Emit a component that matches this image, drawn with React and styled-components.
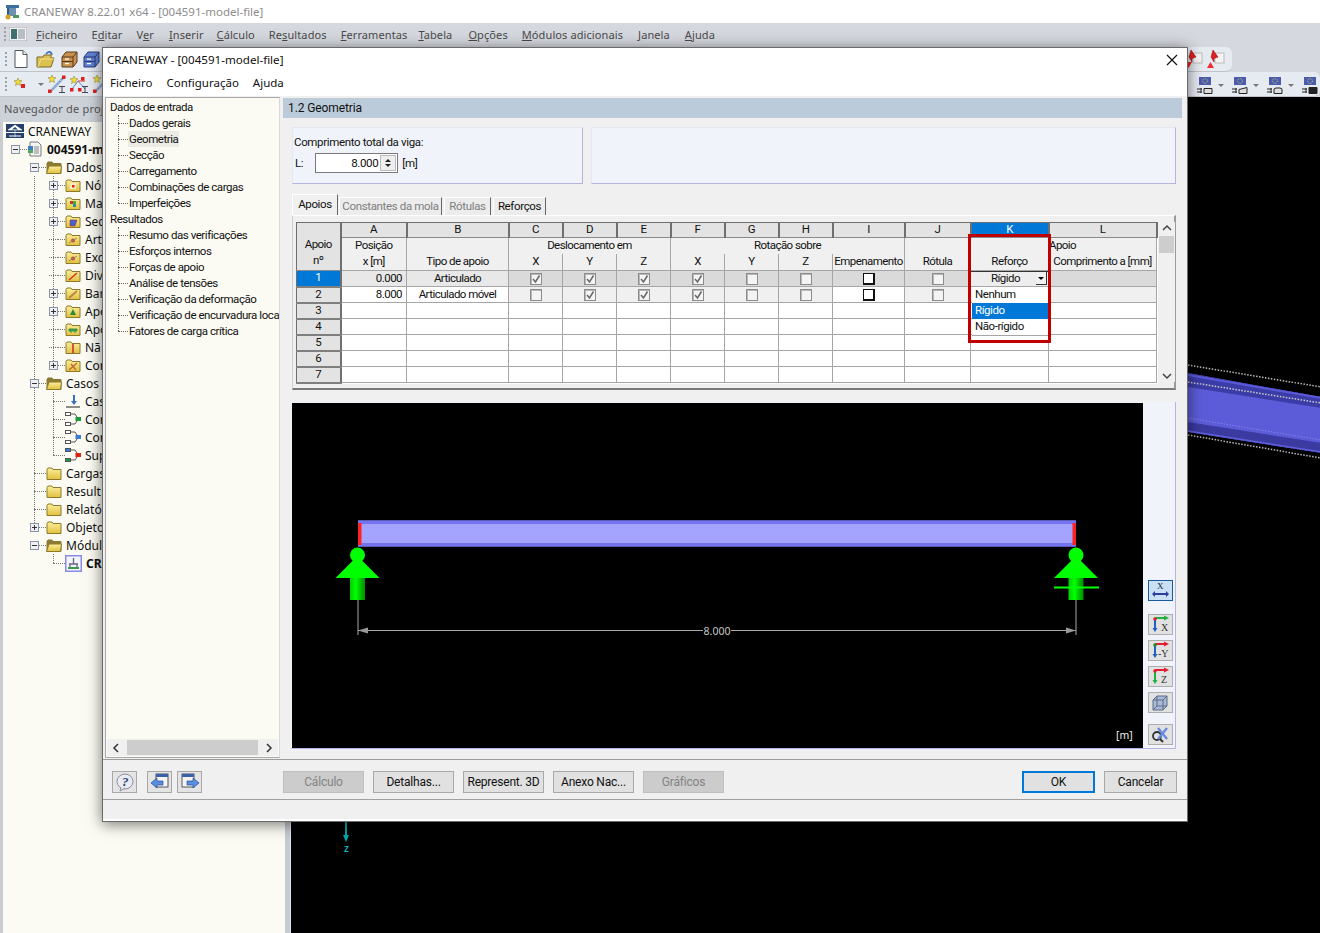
import React from "react";
import styled, { createGlobalStyle } from "styled-components";

const Global = createGlobalStyle`
  html, body { margin: 0; padding: 0; background: #fff; }
  * { box-sizing: border-box; }
  #root { font-family: "Noto Sans", "Liberation Sans", sans-serif; font-size: 12px; color: #111; }
`;

/* ---------- icons ---------- */
const Svg = ({ w = 16, h = 16, vb, children }) => (
  <svg width={w} height={h} viewBox={vb || `0 0 ${w} ${h}`} style={{ display: "block", flex: "none" }}>{children}</svg>
);
const FolderBase = ({ children, open }) => (
  <Svg>
    <defs>
      <linearGradient id="fold" x1="0" x2="0" y1="0" y2="1"><stop offset="0" stopColor="#fbee9c" /><stop offset="1" stopColor="#e2c140" /></linearGradient>
    </defs>
    <path d="M1 4.500 2 3h4l1 1.500h8v10H1z" fill={open ? "#8a7a34" : "url(#fold)"} stroke="#8c7a2a" />
    {open ? <path d="M.5 14.500 3 7h12.500l-1 7.500z" fill="url(#fold)" stroke="#8c7a2a" /> : null}
    {children}
  </Svg>
);
const mark = {
  node: <g><rect x="5" y="6" width="6" height="6" fill="#f6ecc0" /><rect x="7" y="8" width="2.500" height="2.500" fill="#d22" /></g>,
  mat: <g><rect x="5" y="6" width="3" height="3" fill="#c33" /><rect x="8" y="9" width="3" height="3" fill="#38a" /><rect x="8" y="6" width="3" height="3" fill="#4a4" /><rect x="5" y="9" width="3" height="3" fill="#dd4" /></g>,
  sec: <path d="M5 7h7l-2 6H5z" fill="#4466cc" stroke="#a33" strokeWidth=".6" />,
  hinge: <g><circle cx="8" cy="9.500" r="2" fill="#c44" /><path d="M4 12 12 7" stroke="#886" /></g>,
  line: <path d="M4 13 12 6" stroke="#c33" strokeWidth="1.400" />,
  bar: <path d="M4 13 12 6" stroke="#b84" strokeWidth="2" />,
  sup: <path d="M8 6 11 12H5z" fill="#2a8a3a" />,
  rail: <path d="M4 8h8v2H4zM6 10v2M10 10v2" fill="#3a9a4a" stroke="#3a9a4a" />,
  nl: <path d="M8 5v9" stroke="#c33" strokeWidth="1.600" />,
  con: <path d="M4 13 12 6M6 7l5 6" stroke="#b63" strokeWidth="1.200" />,
};
const Load = () => (
  <Svg><path d="M8 2h2v6h2l-3 4-3-4h2z" fill="#3b6fc0" /><path d="M1 14h14" stroke="#444" strokeWidth="1.200" /></Svg>
);
const Combo = ({ a = "#fff", b = "#fff", c }) => (
  <Svg>
    <rect x=".5" y="1.500" width="5" height="3" fill={a} stroke="#555" />
    <rect x=".5" y="11.500" width="5" height="3" fill={b} stroke="#555" />
    <path d="M6 3h4l2 3M6 13h4l2-3" stroke="#555" fill="none" />
    <rect x="11" y="6.500" width="5" height="3" fill={c} stroke={c} />
  </Svg>
);
const Logo = () => (
  <Svg w={18} h={14}>
    <rect width="18" height="14" fill="#27406e" />
    <path d="M9 1 2 6h14zM9 1v12" fill="#fff" stroke="#fff" strokeWidth=".6" />
    <path d="M9 3 6 5.500h6z" fill="#27406e" />
    <path d="M0 8.500h18M3 12h12" stroke="#fff" />
  </Svg>
);
const DocModel = () => (
  <Svg>
    <path d="M3 1h8l3 3v11H3z" fill="#f4f4f4" stroke="#7a7a7a" />
    <rect x="1" y="5" width="5" height="4" fill="#3f7fc0" />
    <rect x="1" y="9" width="5" height="3" fill="#52a860" />
    <path d="M7 6h5M7 8h5M7 10h5M7 12h5" stroke="#888" />
  </Svg>
);
const CraneMod = () => (
  <Svg w={17} h={17}>
    <rect x=".75" y=".75" width="15.500" height="15.500" fill="#f4f4ff" stroke="#8a8ae8" strokeWidth="1.500" />
    <path d="M8.500 3v6M4 9h9M5 9v4M12 9v4" stroke="#667" strokeWidth="1.300" fill="none" />
    <path d="M3 13h11" stroke="#3a9a4a" strokeWidth="2" />
  </Svg>
);
const Doc = () => <Svg w={14} h={18}><path d="M1 .5h8l4 4v13H1z" fill="#fff" stroke="#555" /><path d="M9 .5v4h4" fill="#eee" stroke="#555" /></Svg>;
const OpenFolder = () => <Svg w={19} h={18}><path d="M1 7h6l1-2h7v3h3l-3 9H1z" fill="#dcc050" stroke="#7d6a24" /><path d="M2 17 5 9h13" fill="none" stroke="#f2e08a" /><path d="M10 4c2-3 5-3 6 1" stroke="#3b6fc0" strokeWidth="1.600" fill="none" /></Svg>;
const Drawer = ({ c, d }) => <Svg w={17} h={18}><path d="M1 7 5 2h11v10l-4 5H1z" fill={c} stroke={d} /><path d="M1 7h11v10M12 7l4-5M1 11.500h11" stroke={d} fill="none" /><rect x="4" y="8.500" width="4" height="1.200" fill="#fff" /><rect x="4" y="13" width="4" height="1.200" fill="#fff" /></Svg>;
const StarShape = ({ x = 0, y = 0 }) => <path transform={`translate(${x} ${y})`} d="M4 0 5 2.600l3 .2L5.700 4.600l.8 3L4 6 1.500 7.600l.8-3L0 2.800l3-.2z" fill="#efe13a" stroke="#8a7a20" strokeWidth=".5" />;
const Star = () => <Svg w={14} h={14}><StarShape x={1} y={1} /><rect x="8" y="7" width="4" height="4" fill="#d22" /></Svg>;
const WandI = ({ tail = true }) => <Svg w={19} h={20}><path d="M3 18 17 3" stroke="#7a9ac8" strokeWidth="2.400" /><path d="M3 18 17 3" stroke="#fff" strokeWidth=".7" strokeDasharray="1.500 1.500" /><rect x="1" y="15.500" width="3.500" height="3.500" fill="#d22" /><rect x="15" y="1.500" width="3.500" height="3.500" fill="#d22" /><StarShape x={1} y={1} />{tail ? <path d="M12 12.500h6M15 12.500v5.500M12 18.500h6" stroke="#445" /> : null}</Svg>;
const Nodes = () => <Svg w={20} h={20}><path d="M3 15 9 7l7 8" stroke="#5a8ad8" fill="none" /><path d="M9 7l7 0" stroke="#d33" /><rect x="12" y="3" width="3.500" height="3.500" fill="#d22" /><rect x="1" y="14" width="3.500" height="3.500" fill="#d22" /><rect x="9" y="14" width="3.500" height="3.500" fill="#d22" /><StarShape x={1} y={2} /><path d="M13 12.500h6M16 12.500v5.500M13 18.500h6" stroke="#445" /></Svg>;
const RedPin = ({ up }) => <Svg w={18} h={20}><rect x="8" y="4" width="9" height="10" fill="#f4f4f4" stroke="#bbb" /><path d="M6 1 11 8 7 9.500 7 13 4 8z" fill="#d22" stroke="#900" strokeWidth=".5" />{up ? <path d="M0 19l3.500-6 3.500 6z" fill="#ef3030" /> : <path d="M0 13h7l-3.500 6z" fill="#e22" />}</Svg>;
const EuSup = ({ v }) => (
  <Svg w={16} h={17}>
    <rect x="2" y="0" width="12" height="8" fill="#4a5cb0" />
    <circle cx="8" cy="4" r="2.400" fill="none" stroke="#d8c840" strokeDasharray="1 1" />
    <path d="M0 12h5M0 15h5M4 11v5" stroke="#222" />
    <path d={v === 1 ? "M7 11.500h8v5H7z" : v === 2 ? "M7 12.500l8-2v6H7z" : v === 3 ? "M7 16.500V12l2-1h4l2 1v4.500z" : "M7 10.500h8v6H7zM9 13.500h4v3H9z"} fill={v === 4 ? "#222" : "#ddd"} stroke="#222" />
  </Svg>
);
const ColorAxes = ({ a, b, l }) => (
  <Svg w={19} h={19}>
    <path d="M4 4v11" stroke={b} strokeWidth="2" />
    <path d="M1.500 13h5L4 17z" fill={b} />
    <path d="M4 3h11" stroke={a} strokeWidth="2" />
    <path d="M13 .5v5L18 3z" fill={a} />
    <circle cx="4" cy="4" r="1.800" fill={l === "-Y" ? "#2a8a2a" : "#d23"} />
    <text x={l === "-Y" ? 7 : 10} y="16" fontSize="10" fontFamily="Liberation Serif, serif" fill="#333">{l}</text>
  </Svg>
);
const HelpIcon = () => <Svg w={20} h={20}><ellipse cx="10" cy="9.500" rx="8" ry="7.500" fill="#e8ecf2" stroke="#8a8fa0" /><path d="M6 15 5 19l5-3" fill="#e8ecf2" stroke="#8a8fa0" /><text x="7" y="14" fontSize="13" fontWeight="700" fontStyle="italic" fontFamily="Liberation Serif, serif" fill="#27406e">?</text></Svg>;
const PageArrow = ({ right }) => (
  <Svg w={20} h={18}>
    <rect x={right ? 2 : 6} y="1" width="12" height="13" fill="#f4f4f4" stroke="#556" />
    <rect x={right ? 2 : 6} y="1" width="12" height="3" fill="#3b5fa8" />
    <path d={right ? "M7 8h6V5l6 5-6 5v-3H7z" : "M13 8H7V5l-6 5 6 5v-3h6z"} fill="#5a8fe0" stroke="#274a90" strokeWidth=".7" />
  </Svg>
);

/* ---------- background application ---------- */
const Screen = styled.div`
  position: relative; width: 1320px; height: 933px; overflow: hidden; display: flex; flex-direction: column; background: #fff;
`;
const AppTitle = styled.div`
  height: 23px; flex: none; display: flex; align-items: center; gap: 4px; padding-left: 4px; background: #fff;
  color: #8d8d8d; font-size: 11.5px;
`;
const AppMenu = styled.div`
  height: 24px; flex: none; display: flex; align-items: center; background: #d5d8de; padding: 0 0 2px 4px;
`;
const Grip = styled.i`
  display: block; width: 2px; height: 14px; flex: none;
  background: repeating-linear-gradient(#9aa2ac 0 2px, transparent 2px 4px);
`;
const MenuItem = styled.span`
  color: #4a4a4a; font-size: 11px; letter-spacing: .1px; margin-left: ${p => p.$m}px; white-space: nowrap;
  u { text-decoration: underline; }
`;
const ToolRow = styled.div`
  height: ${p => p.$h}px; flex: none; background: #d5d8de;
`;
const Tool = styled.div`
  height: 100%; width: ${p => p.$w ? p.$w + "px" : "auto"}; display: flex; align-items: center; padding-left: 5px;
  background: #e6eaf1; border-radius: 0 6px 6px 0; border-bottom: 1px solid #c0c4ca;
`;
const ToolGap = styled.span`
  display: flex; align-items: center; margin-left: ${p => p.$m}px; margin-top: ${p => p.$t || 0}px; gap: ${p => p.$g || 0}px; flex: none;
`;
const Caret = styled.i`
  display: block; width: 0; height: 0; margin-left: ${p => p.$m || 0}px; border: 3px solid transparent; border-top: 3px solid #777; border-bottom: 0;
`;
const AppBody = styled.div`flex: 1; display: flex; min-height: 0;`;
const NavPanel = styled.div`
  width: 285px; flex: none; background: #fbfbf3; border-left: 3px solid #c9cdd2; display: flex; flex-direction: column;
`;
const NavTitle = styled.div`
  height: 25px; flex: none; margin-left: -3px; padding: 0 0 0 4px; background: #cdd1d8; color: #555; font-size: 11px; letter-spacing: .2px; line-height: 24px; white-space: nowrap;
`;
const Tree = styled.div`width: 99px; overflow: hidden;`;
const TreeRow = styled.div`
  height: 18px; display: flex; align-items: center; white-space: nowrap; padding-left: ${p => p.$x}px;
  font-size: 12px; font-weight: ${p => (p.$b ? 700 : 400)};
`;
const Branch = styled.div`
  position: relative;
  &::before { content: ""; position: absolute; left: ${p => p.$x}px; top: 0; bottom: ${p => p.$tail}px; border-left: 1px dotted #777; }
`;
const Exp = styled.span`
  width: 9px; height: 9px; flex: none; position: relative; z-index: 1; background: #eef0f4; border: 1px solid #8a94a4;
  &::before { content: ""; position: absolute; left: 1px; right: 1px; top: 3px; height: 1px; background: #333; }
  &::after { content: ${p => (p.$minus ? "none" : '""')}; position: absolute; top: 1px; bottom: 1px; left: 3px; width: 1px; background: #333; }
`;
const Stub = styled.span`
  display: block; width: ${p => p.$w}px; flex: none; border-top: 1px dotted #777;
`;
const NodeLabel = styled.span`margin-left: ${p => p.$m ?? 4}px;`;
const Splitter = styled.div`width: 6px; flex: none; background: #c6cbd1; border-right: 1px solid #e2e5e8;`;
const View3D = styled.div`flex: 1; background: #000; position: relative;`;
const SceneSvg = styled.svg`position: absolute; left: 0; top: 0; display: block;`;

/* ---------- dialog ---------- */
const Dialog = styled.div`
  position: absolute; left: 102px; top: 47px; width: 1086px; height: 775px; background: #f0f0f0;
  border: 1px solid #6a6a6a; box-shadow: 0 2px 14px rgba(0,0,0,.55); display: flex; flex-direction: column;
`;
const DlgTitle = styled.div`
  height: 23px; flex: none; background: #fff; display: flex; align-items: center; justify-content: space-between; padding: 0 9px 0 4px; font-size: 11.6px;
`;
const DlgMenu = styled.div`
  height: 25px; flex: none; background: #fff; display: flex; align-items: center; gap: 14px; padding: 0 0 2px 7px; font-size: 11.5px;
`;
const DlgBody = styled.div`flex: 1; min-height: 0; display: flex; padding: 1px 5px 0 2px; gap: 3px;`;
const DlgNav = styled.div`
  width: 175px; flex: none; background: #fbfbf3; border: 1px solid #a9a9a9; border-right-color: #d8d8d8; display: flex; flex-direction: column;
`;
const DlgTree = styled.div`flex: 1; min-height: 0; overflow: hidden; padding: 1px 0 0 4px; white-space: nowrap; font-family: Roboto, sans-serif; font-size: 11.5px; letter-spacing: -.44px;`;
const DlgHead = styled.div`height: 16px; line-height: 16px;`;
const DlgGroup = styled.div`
  position: relative;
  &::before { content: ""; position: absolute; left: 8px; top: 0; bottom: 8px; border-left: 1px dotted #666; }
`;
const DlgLeaf = styled.div`
  height: 16px; line-height: 16px; display: flex; align-items: center; padding-left: 8px;
  span { padding: 0 1px; ${p => p.$active ? "background: #ecece4;" : ""} }
  &::before { content: ""; width: 10px; flex: none; border-top: 1px dotted #666; }
`;
const HScroll = styled.div`
  height: 17px; flex: none; margin: 0 1px 1px; display: flex; align-items: center; justify-content: space-between; background: #f0f0f0; padding: 0 5px;
`;
const HThumb = styled.div`width: 131px; height: 15px; background: #cdcdcd;`;
const Main = styled.div`flex: 1; min-width: 0; padding-top: 1px; font-family: Roboto, sans-serif;`;
const SectionHead = styled.div`
  height: 20px; background: #bccbd9; padding-left: 5px; line-height: 20px; font-size: 12px; letter-spacing: -.1px;
`;
const PanelRow = styled.div`display: flex; gap: 8px; margin: 9px 6px 0 9px;`;
const InfoPanel = styled.div`
  width: ${p => p.$w ? p.$w + "px" : "auto"}; flex: ${p => p.$w ? "none" : 1}; height: 57px; background: #f0f4fa;
  border: 1px solid #e4e8f4; border-right-color: #b4b4e0; border-bottom-color: #b4b4e0; padding: 6px 0 0 1px; font-size: 11.5px; letter-spacing: -.35px; line-height: 16px;
`;
const FieldRow = styled.div`display: flex; align-items: center; margin-top: 3px; padding-left: 1px;`;
const NumBox = styled.div`
  width: 83px; height: 20px; margin: 0 4px 0 12px; background: #fff; border: 1px solid #7a7a7a; display: flex; align-items: center; justify-content: flex-end; padding-right: 1px; gap: 2px;
`;
const Spin = styled.div`
  width: 16px; height: 16px; background: #eee; border: 1px solid #bbb; display: flex; flex-direction: column; align-items: center; justify-content: space-around; padding: 2px 0;
  i { display: block; width: 0; height: 0; border: 3px solid transparent; }
  i:first-child { border-bottom: 3px solid #222; border-top: 0; }
  i:last-child { border-top: 3px solid #222; border-bottom: 0; }
`;
const Tabs = styled.div`display: flex; margin: 10px 6px 0 9px; height: 21px; align-items: flex-end;`;
const Tab = styled.div`
  width: ${p => p.$w}px; text-align: center; height: ${p => p.$on ? 21 : 18}px; margin-right: ${p => p.$on ? 1 : 2}px; background: ${p => p.$on ? "#f0f0f0" : "#ececec"};
  border-right: 1px solid #666; border-left: 1px solid #fff; border-top: 1px solid #fff; line-height: ${p => p.$on ? 19 : 17}px; font-size: 11.5px; letter-spacing: -.35px;
  color: ${p => p.$dim ? "#7d7d7d" : "#111"}; white-space: nowrap;
`;
const TableFrame = styled.div`
  position: relative; margin: 0 6px 0 9px; height: 175px; padding: 6px 3px 0; display: flex; border-top: 1px solid #fff; border-bottom: 2px solid #7a7a7a; border-right: 2px solid #9a9a9a; border-left: 1px solid #d0d0d0;
`;
const Sheet = styled.table`
  table-layout: fixed; width: 860px; flex: none; align-self: flex-start; border-collapse: collapse; font-size: 11.5px; letter-spacing: -.55px; background: #fff; border: 1px solid #6e6e6e;
  td, th { padding: 0; font-weight: 400; vertical-align: top; }
`;
const Letter = styled.th`
  height: 15px; background: ${p => p.$on ? "#0078d7" : "#e3e3e3"}; color: ${p => p.$on ? "#fff" : "#111"}; text-align: center;
  border-right: 2px solid #6f6f6f; border-bottom: 1px solid #8a8a8a; line-height: 13px;
`;
const Corner = styled.th`
  background: #e3e3e3; border-right: 2px solid #6f6f6f; border-bottom: 1px solid #8a8a8a; line-height: 16px; text-align: center;
  padding-top: 13px !important;
`;
const Cap = styled.th`
  height: ${p => p.$b ? 17 : 16}px; background: #f0f0f0; text-align: ${p => p.$l ? "left" : "center"}; white-space: nowrap; position: relative; line-height: 15px;
  border-right: ${p => p.$noR ? "0" : "1px solid #a6a6a6"};
  border-bottom: ${p => p.$b ? "1px solid #a6a6a6" : "0"};
`;
const RowNum = styled.th`
  height: 16px; background: ${p => p.$on ? "#0078d7" : "#e3e3e3"}; color: ${p => p.$on ? "#fff" : "#111"}; text-align: center;
  border-right: 2px solid #6f6f6f; border-bottom: 2px solid #7f7f7f; line-height: 13px;
`;
const Cell = styled.td`
  background: ${p => p.$bg || "#fff"}; border-right: 1px solid #a6a6a6; border-bottom: 1px solid #a6a6a6; line-height: 14px; height: 16px;
  text-align: ${p => p.$al || "center"}; padding-right: ${p => p.$pr || 0}px !important; white-space: nowrap; position: relative;
`;
const Check = styled.span`
  display: inline-flex; vertical-align: middle; width: 12px; height: 12px; align-items: center; justify-content: center; background: #f4f4f4; border: 1px solid #8c8c8c; box-shadow: 1px 1px 0 #b8b8b8 inset;
`;
const BlackBox = styled.span`
  display: inline-block; vertical-align: middle; width: 12px; height: 12px; background: #fff; border: 1px solid #111; border-right-width: 2px; border-bottom-width: 2px;
`;
const ComboCell = styled.div`
  height: 15px; display: flex; align-items: center; justify-content: center; position: relative; background: #ededed; border-top: 1px solid #333; padding: 0 8px 1px 0; line-height: 13px;
`;
const ComboBtn = styled.span`
  position: absolute; right: 1px; top: 0; width: 11px; height: 13px; background: #f0f0f0; border-right: 1px solid #333; border-bottom: 1px solid #333; display: flex; align-items: center; justify-content: center;
  &::before { content: ""; border: 3px solid transparent; border-top: 3px solid #000; border-bottom: 0; }
`;
const DropList = styled.div`
  position: absolute; left: 1px; top: 16px; width: 76px; z-index: 3; background: #fff; border-bottom: 1px solid #a6a6a6; text-align: left; height: 49px;
`;
const DropItem = styled.div`
  height: 16px; line-height: 15px; padding-left: 3px; background: ${p => p.$on ? "#0078d7" : "transparent"}; color: ${p => p.$on ? "#fff" : "#111"}; letter-spacing: -.45px;
`;
const RedFrame = styled.div`
  position: absolute; left: 675px; top: 18px; width: 83px; height: 109px; border: 3px solid #c00000; z-index: 4; pointer-events: none;
`;
const VScroll = styled.div`
  width: 16px; flex: none; height: 160px; margin-left: 1px; background: #f0f0f0; display: flex; flex-direction: column; align-items: center; justify-content: space-between; padding: 2px 0;
`;
const VThumb = styled.div`width: 15px; height: 17px; background: #cdcdcd; margin-top: 4px;`;
const Spacer = styled.div`flex: 1;`;
const ViewRow = styled.div`
  margin: 12px 6px 0 8px; height: 347px; display: flex; border-bottom: 1px solid #b4b4e0; border-right: 1px solid #b4b4e0; background: #f0f4fa;
`;
const Canvas = styled.div`width: 851px; height: 345px; margin: 1px 0 0 1px; flex: none; background: #000; position: relative;`;
const SideBar = styled.div`
  flex: 1; display: flex; flex-direction: column; align-items: center; padding-top: 178px; padding-left: 2px; gap: 5px;
`;
const SideBtn = styled.div`
  width: 25px; height: 21px; flex: none; margin-top: ${p => p.$m || 0}px; display: flex; align-items: center; justify-content: center;
  background: ${p => p.$on ? "#c9e0f5" : "#e1e1e1"}; border: 1px solid ${p => p.$on ? "#1a5a9a" : "#adadad"};
`;
const Bottom = styled.div`
  height: 40px; flex: none; border-top: 1px solid #9c9c9c; margin-top: 1px; display: flex; align-items: center; padding: 4px 10px 0 9px; font-family: Roboto, sans-serif; font-size: 12px;
`;
const IconBtn = styled.div`
  width: 25px; height: 22px; flex: none; margin-left: ${p => p.$m || 0}px; border: 1px solid #a8a8a8; background: #e4e4e4; display: flex; align-items: center; justify-content: center;
`;
const Btn = styled.div`
  width: ${p => p.$w || 81}px; height: 22px; flex: none; margin-left: ${p => p.$push ? "auto" : p.$m + "px"}; display: flex; align-items: center; justify-content: center; white-space: nowrap; letter-spacing: -.2px;
  border: ${p => p.$def ? "2px solid #0078d7" : p.$off ? "1px solid #bfbfbf" : "1px solid #a8a8a8"};
  background: ${p => p.$off ? "#cccccc" : "#e1e1e1"}; color: ${p => p.$off ? "#838383" : "#111"};
`;
const Status = styled.div`
  height: 22px; flex: none; border-top: 1px solid #a0a0a0; border-bottom: 2px solid #fff;
`;

/* ---------- data ---------- */
const COLS = [44, 66, 102, 54, 54, 54, 54, 54, 54, 72, 66, 78, 108];
const LETTERS = "ABCDEFGHIJKL".split("");
const TICK = (
  <Svg w={10} h={10}><path d="M2 5 4.500 8 8.500 1.500" fill="none" stroke="#6a6a6a" strokeWidth="1.600" /></Svg>
);
const Box = ({ on }) => <Check>{on ? TICK : null}</Check>;
const ROW1 = [1, 1, 1, 1, 0, 0];
const ROW2 = [0, 1, 1, 1, 0, 0];

const NAV_A = ["Dados gerais", "Geometria", "Secção", "Carregamento", "Combinações de cargas", "Imperfeições"];
const NAV_B = ["Resumo das verificações", "Esforços internos", "Forças de apoio", "Análise de tensões", "Verificação da deformação", "Verificação de encurvadura local", "Fatores de carga crítica"];

const DADOS = [
  ["Nós", "node", 1], ["Ma", "mat", 1], ["Sec", "sec", 1], ["Art", "hinge", 0], ["Exc", "hinge", 0],
  ["Div", "line", 0], ["Bar", "bar", 1], ["Apo", "sup", 1], ["Apo", "rail", 0], ["Nã", "nl", 0], ["Cor", "con", 1],
];
const Closed = ({ m }) => <FolderBase>{mark[m]}</FolderBase>;

const MENU = [
  ["Ficheiro", 9, 0], ["Editar", 14, 1], ["Ver", 14, 1], ["Inserir", 15, 0], ["Cálculo", 13, 0], ["Resultados", 14, 2],
  ["Ferramentas", 14, 0], ["Tabela", 11, 0], ["Opções", 16, 0], ["Módulos adicionais", 14, 0], ["Janela", 15, 0], ["Ajuda", 15, 0],
];

export default function App() {
  return (
    <Screen>
      <Global />
      <AppTitle>
        <Svg w={16} h={16}>
          <rect x="2" y="1" width="13" height="3" fill="#3b6f9f" /><rect x="5" y="4" width="7" height="8" fill="#6d8fb0" /><rect x="3" y="4" width="2" height="9" fill="#2b5a88" />
          <circle cx="4" cy="13" r="2.500" fill="#d8a020" /><rect x="9" y="11" width="6" height="3" fill="#4a9a5a" />
        </Svg>
        CRANEWAY 8.22.01 x64 - [004591-model-file]
      </AppTitle>
      <AppMenu>
        <Grip />
        <ToolGap $m={3}><Svg w={18} h={14}><rect width="18" height="14" fill="#f2f2f2" stroke="#a0a0a0" /><rect x="2" y="2" width="6" height="10" fill="#3f6f6f" /><rect x="9" y="2" width="7" height="10" fill="#b8bcc4" /></Svg></ToolGap>
        {MENU.map(([word, m, at], i) => (
          <MenuItem key={i} $m={m}>
            {word.slice(0, at)}<u>{word[at]}</u>{word.slice(at + 1)}
          </MenuItem>
        ))}
      </AppMenu>
      <ToolRow $h={25}>
        <Tool $w={1232}>
          <Grip />
          <ToolGap $m={7} $g={8}><Doc /><OpenFolder /></ToolGap>
          <ToolGap $m={6} $g={5}><Drawer c="#c89050" d="#5c3a1a" /><Drawer c="#5f82d0" d="#2a3a78" /></ToolGap>
          <ToolGap $m={1085} $g={4}><RedPin /><RedPin up /></ToolGap>
        </Tool>
      </ToolRow>
      <ToolRow $h={25}>
        <Tool>
          <Grip />
          <ToolGap $m={6}><Star /><Caret $m={11} /></ToolGap>
          <ToolGap $m={3} $g={3}><WandI /><Nodes /><WandI tail={false} /></ToolGap>
          <ToolGap $m={1086} $t={3}><EuSup v={1} /><Caret $m={5} /></ToolGap>
          <ToolGap $m={8} $t={3}><EuSup v={2} /><Caret $m={5} /></ToolGap>
          <ToolGap $m={8} $t={3}><EuSup v={3} /><Caret $m={5} /></ToolGap>
          <ToolGap $m={8} $t={3}><EuSup v={4} /></ToolGap>
        </Tool>
      </ToolRow>
      <AppBody>
        <NavPanel>
          <NavTitle>Navegador de proj</NavTitle>
          <Tree>
            <TreeRow $x={3}><Logo /><NodeLabel $m={4}>CRANEWAY</NodeLabel></TreeRow>
            <TreeRow $x={8} $b><Exp $minus /><Stub $w={7} /><DocModel /><NodeLabel>004591-m</NodeLabel></TreeRow>
            <TreeRow $x={27}><Exp $minus /><Stub $w={7} /><FolderBase open /><NodeLabel>Dados</NodeLabel></TreeRow>
            <Branch $x={31} $tail={27}>
              <Branch $x={50} $tail={9}>
                {DADOS.map(([t, m, e]) => (
                  <TreeRow key={t + m} $x={46}>
                    {e ? <Exp /> : <Stub $w={9} />}<Stub $w={7} /><Closed m={m} /><NodeLabel>{t}</NodeLabel>
                  </TreeRow>
                ))}
              </Branch>
              <TreeRow $x={27}><Exp $minus /><Stub $w={7} /><FolderBase open /><NodeLabel>Casos</NodeLabel></TreeRow>
              <Branch $x={50} $tail={9}>
                <TreeRow $x={50}><Stub $w={12} /><Load /><NodeLabel>Cas</NodeLabel></TreeRow>
                <TreeRow $x={50}><Stub $w={12} /><Combo c="#1a9a3a" /><NodeLabel>Cor</NodeLabel></TreeRow>
                <TreeRow $x={50}><Stub $w={12} /><Combo c="#3a7ad8" /><NodeLabel>Cor</NodeLabel></TreeRow>
                <TreeRow $x={50}><Stub $w={12} /><Combo a="#3a7ad8" b="#1a9a3a" c="#d21" /><NodeLabel>Sup</NodeLabel></TreeRow>
              </Branch>
              <TreeRow $x={31}><Stub $w={12} /><FolderBase /><NodeLabel>Cargas</NodeLabel></TreeRow>
              <TreeRow $x={31}><Stub $w={12} /><FolderBase /><NodeLabel>Result</NodeLabel></TreeRow>
              <TreeRow $x={31}><Stub $w={12} /><FolderBase /><NodeLabel>Relatór</NodeLabel></TreeRow>
              <TreeRow $x={27}><Exp /><Stub $w={7} /><FolderBase /><NodeLabel>Objeto</NodeLabel></TreeRow>
              <TreeRow $x={27}><Exp $minus /><Stub $w={7} /><FolderBase open /><NodeLabel>Módul</NodeLabel></TreeRow>
            </Branch>
            <Branch $x={50} $tail={9}>
              <TreeRow $x={50} $b><Stub $w={12} /><CraneMod /><NodeLabel>CR</NodeLabel></TreeRow>
            </Branch>
          </Tree>
        </NavPanel>
        <Splitter />
        <View3D>
          <SceneSvg width="1030" height="836" viewBox="0 0 1030 836">
            <path d="M897 268 1030 290" stroke="#bbb" strokeDasharray="1.500 1.500" strokeWidth="1.500" />
            <path d="M897 276 1030 300V356L897 335z" fill="#5c5cd8" />
            <path d="M897 276 1030 300V311L897 290z" fill="#3c3ca8" />
            <path d="M897 278 1030 301" stroke="#5a5ad8" strokeWidth="2" />
            <path d="M897 285 1030 306" stroke="#ccc" strokeDasharray="1.500 1.500" strokeWidth="1.500" />
            <path d="M897 321 1030 343" stroke="#8282e4" strokeDasharray="1.500 1.500" />
            <path d="M897 325 1030 346V356L897 335z" fill="#3a3aa0" />
            <path d="M897 334 1030 355" stroke="#5f5fd8" strokeWidth="1.500" />
            <path d="M897 338 1030 361" stroke="#bbb" strokeDasharray="1.500 1.500" strokeWidth="1.500" />
            <path d="M55 725V743" stroke="#00a8b0" strokeWidth="2" />
            <path d="M52 738h6l-3 7z" fill="#00a8b0" />
            <text x="53" y="755" fill="#00d8e0" fontSize="10" fontFamily="Liberation Sans, sans-serif">z</text>
          </SceneSvg>
        </View3D>
      </AppBody>

      <Dialog>
        <DlgTitle>
          <span>CRANEWAY - [004591-model-file]</span>
          <Svg w={12} h={12}><path d="M1 1 11 11M11 1 1 11" stroke="#111" strokeWidth="1.200" /></Svg>
        </DlgTitle>
        <DlgMenu><span>Ficheiro</span><span>Configuração</span><span>Ajuda</span></DlgMenu>
        <DlgBody>
          <DlgNav>
            <DlgTree>
              <DlgHead>Dados de entrada</DlgHead>
              <DlgGroup>{NAV_A.map(t => <DlgLeaf key={t} $active={t === "Geometria"}><span>{t}</span></DlgLeaf>)}</DlgGroup>
              <DlgHead>Resultados</DlgHead>
              <DlgGroup>{NAV_B.map(t => <DlgLeaf key={t}><span>{t}</span></DlgLeaf>)}</DlgGroup>
            </DlgTree>
            <HScroll>
              <Svg w={8} h={10}><path d="M6 1 2 5l4 4" fill="none" stroke="#333" strokeWidth="1.500" /></Svg>
              <HThumb />
              <Svg w={8} h={10}><path d="M2 1l4 4-4 4" fill="none" stroke="#333" strokeWidth="1.500" /></Svg>
            </HScroll>
          </DlgNav>
          <Main>
            <SectionHead>1.2 Geometria</SectionHead>
            <PanelRow>
              <InfoPanel $w={291}>
                Comprimento total da viga:
                <FieldRow>
                  <span>L:</span>
                  <NumBox>8.000<Spin><i /><i /></Spin></NumBox>
                  <span>[m]</span>
                </FieldRow>
              </InfoPanel>
              <InfoPanel />
            </PanelRow>
            <Tabs>
              <Tab $on $w={46}>Apoios</Tab>
              <Tab $dim $w={103}>Constantes da mola</Tab>
              <Tab $dim $w={47}>Rótulas</Tab>
              <Tab $w={53}>Reforços</Tab>
            </Tabs>
            <TableFrame>
              <Sheet>
                <colgroup>{COLS.map((w, i) => <col key={i} style={{ width: w }} />)}</colgroup>
                <thead>
                  <tr>
                    <Corner rowSpan={3}>Apoio<br />nº</Corner>
                    {LETTERS.map(l => <Letter key={l} $on={l === "K"}>{l}</Letter>)}
                  </tr>
                  <tr>
                    <Cap>Posição</Cap>
                    <Cap />
                    <Cap colSpan={3}>Deslocamento em</Cap>
                    <Cap colSpan={4}>Rotação sobre</Cap>
                    <Cap />
                    <Cap />
                    <Cap $l>Apoio</Cap>
                  </tr>
                  <tr>
                    <Cap $b>x [m]</Cap>
                    <Cap $b>Tipo de apoio</Cap>
                    {["X", "Y", "Z", "X", "Y", "Z"].map((c, i) => <Cap key={i} $b>{c}</Cap>)}
                    <Cap $b>Empenamento</Cap>
                    <Cap $b>Rótula</Cap>
                    <Cap $b>Reforço</Cap>
                    <Cap $b>Comprimento a [mm]</Cap>
                  </tr>
                </thead>
                <tbody>
                  <tr>
                    <RowNum $on>1</RowNum>
                    <Cell $bg="#e8e8e8" $al="right" $pr={4}>0.000</Cell>
                    <Cell $bg="#e8e8e8">Articulado</Cell>
                    {ROW1.map((c, i) => <Cell key={i} $bg="#dadada"><Box on={c} /></Cell>)}
                    <Cell $bg="#dadada"><BlackBox /></Cell>
                    <Cell $bg="#dadada"><Box /></Cell>
                    <Cell $bg="#dadada">
                      <ComboCell>Rígido<ComboBtn /></ComboCell>
                      <DropList>
                        <DropItem>Nenhum</DropItem>
                        <DropItem $on>Rígido</DropItem>
                        <DropItem>Não-rígido</DropItem>
                      </DropList>
                    </Cell>
                    <Cell $bg="#dadada" />
                  </tr>
                  <tr>
                    <RowNum>2</RowNum>
                    <Cell $al="right" $pr={4}>8.000</Cell>
                    <Cell>Articulado móvel</Cell>
                    {ROW2.map((c, i) => <Cell key={i} $bg="#f0f0f0"><Box on={c} /></Cell>)}
                    <Cell><BlackBox /></Cell>
                    <Cell $bg="#f0f0f0"><Box /></Cell>
                    <Cell $bg="#f0f0f0" />
                    <Cell $bg="#f0f0f0" />
                  </tr>
                  {[3, 4, 5, 6, 7].map(n => (
                    <tr key={n}>
                      <RowNum>{n}</RowNum>
                      {LETTERS.map(l => <Cell key={l} />)}
                    </tr>
                  ))}
                </tbody>
              </Sheet>
              <VScroll>
                <Svg w={10} h={8}><path d="M1 6l4-4 4 4" fill="none" stroke="#444" strokeWidth="1.500" /></Svg>
                <VThumb />
                <Spacer />
                <Svg w={10} h={8}><path d="M1 2l4 4 4-4" fill="none" stroke="#444" strokeWidth="1.500" /></Svg>
              </VScroll>
              <RedFrame />
            </TableFrame>
            <ViewRow>
              <Canvas>
                <svg width="851" height="345" viewBox="292 403 851 345" style={{ display: "block" }}>
                  <defs>
                    <linearGradient id="post" x1="0" x2="1" y1="0" y2="0">
                      <stop offset="0" stopColor="#00d000" /><stop offset=".4" stopColor="#00ff00" /><stop offset=".8" stopColor="#00b000" /><stop offset="1" stopColor="#009000" />
                    </linearGradient>
                  </defs>
                  <rect x="358" y="520" width="718" height="27" fill="#5a5ab8" />
                  <rect x="358" y="521" width="718" height="25" fill="#a4a4ff" />
                  <rect x="358" y="521" width="718" height="3" fill="#7474f0" />
                  <rect x="358" y="543" width="718" height="3" fill="#7474f0" />
                  <rect x="358" y="523" width="3.500" height="22" fill="#ff2020" />
                  <rect x="1072.500" y="523" width="3.500" height="22" fill="#ff2020" />
                  {[357.5, 1076].map((x, i) => (
                    <g key={i}>
                      <rect x={x - 7.5} y="578" width="15" height="22" fill="url(#post)" />
                      <path d={`M${x - 22} 578 L${x} 556 L${x + 22} 578Z`} fill="#00ff00" />
                      <circle cx={x} cy="555" r="7.500" fill="#00ff00" />
                    </g>
                  ))}
                  <rect x="1054" y="586.500" width="45" height="2" fill="#00ff00" />
                  <path d="M358 600V635M1076 600V635" stroke="#aaa" />
                  <path d="M358 630.500H703M731 630.500H1076" stroke="#aaa" />
                  <path d="M358 630.500 368 627.500V633.500ZM1076 630.500 1066 627.500V633.500Z" fill="#999" />
                  <text x="717" y="635" textAnchor="middle" fill="#c8c8c8" fontSize="10.500" fontFamily="Noto Sans, sans-serif">8.000</text>
                  <text x="1116" y="739" fill="#eee" fontSize="10.500" fontFamily="Noto Sans, sans-serif">[m]</text>
                </svg>
              </Canvas>
              <SideBar>
                <SideBtn $on>
                  <Svg w={19} h={18}>
                    <text x="6" y="7" fontSize="9" fontFamily="Liberation Serif, serif" fill="#123">X</text>
                    <path d="M2 12h15" stroke="#2a3f9a" strokeWidth="2" /><path d="M4 9 1 12l3 3zM15 9l3 3-3 3z" fill="#2a3f9a" />
                  </Svg>
                </SideBtn>
                <SideBtn $m={8}><ColorAxes a="#20b040" b="#2060c0" l="X" /></SideBtn>
                <SideBtn><ColorAxes a="#e02030" b="#2060c0" l="-Y" /></SideBtn>
                <SideBtn><ColorAxes a="#e02030" b="#20b040" l="Z" /></SideBtn>
                <SideBtn>
                  <Svg w={18} h={18}><path d="M2 6 6 2h10v10l-4 4H2z" fill="#a8bad4" stroke="#5a6a88" /><path d="M6 2v10h10M6 12l-4 4M2 6h10v10M12 6l4-4" fill="none" stroke="#5a6a88" /></Svg>
                </SideBtn>
                <SideBtn $m={6}>
                  <Svg w={20} h={18}><circle cx="7" cy="10" r="4" fill="none" stroke="#333" strokeWidth="1.800" /><path d="M10 13l3 3" stroke="#333" strokeWidth="2" /><path d="M8 2l9 11M17 2 8 13" stroke="#6a8adf" strokeWidth="2.400" /></Svg>
                </SideBtn>
              </SideBar>
            </ViewRow>
          </Main>
        </DlgBody>
        <Bottom>
          <IconBtn><HelpIcon /></IconBtn>
          <IconBtn $m={10}><PageArrow /></IconBtn>
          <IconBtn $m={5}><PageArrow right /></IconBtn>
          <Btn $m={81} $off>Cálculo</Btn>
          <Btn $m={9}>Detalhas...</Btn>
          <Btn $m={9}>Represent. 3D</Btn>
          <Btn $m={9}>Anexo Nac...</Btn>
          <Btn $m={9} $off>Gráficos</Btn>
          <Btn $push $def $w={73}>OK</Btn>
          <Btn $m={9} $w={73}>Cancelar</Btn>
        </Bottom>
        <Status />
      </Dialog>
    </Screen>
  );
}
